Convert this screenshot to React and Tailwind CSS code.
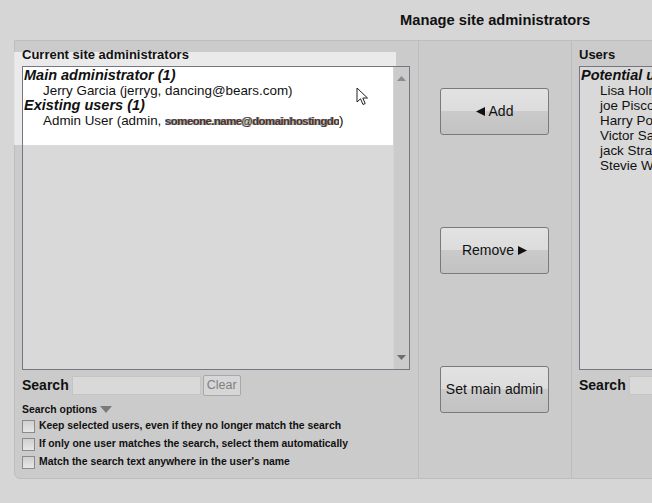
import React from 'react';

const Btn = ({ children, className = '' }) => (
    <button
        className={`w-[109px] h-[47px] rounded-[3px] border border-[#7a7a7a] bg-[linear-gradient(#e2e2e2_0%,#dcdcdc_49%,#cacaca_50%,#c2c2c2_100%)] text-[14px] text-[#111] flex items-center justify-center gap-1 ${className}`}
    >
        {children}
    </button>
);

const Scrollbar = () => (
    <div className="w-[16px] h-full bg-[#cbcbcb] border-l border-[#d4d4d4] flex flex-col justify-between items-center py-[9px]">
        <svg width="9" height="5" viewBox="0 0 9 5"><path d="M0 5 L4.5 0 L9 5 Z" fill="#8c8c8c" /></svg>
        <svg width="9" height="5" viewBox="0 0 9 5"><path d="M0 0 L4.5 5 L9 0 Z" fill="#6e6e6e" /></svg>
    </div>
);

const Checkbox = ({ label }) => (
    <label className="flex items-center gap-[4px] h-[18px]">
        <span className="w-[13px] h-[13px] border border-[#8a8a8a] bg-[linear-gradient(#d0d0d0,#e6e6e6)] shrink-0" />
        <span className="text-[10.4px] font-bold text-[#111]">{label}</span>
    </label>
);

const SearchRow = ({ clear = true }) => (
    <div className="flex items-center h-[22px] mt-[4px]">
        <span className="text-[14px] font-bold text-[#111] mr-[3px]">Search</span>
        <input className="w-[129px] h-[19px] bg-[#d9d9d9] border border-[#c4c4c4] outline-none" />
        {clear && (
            <button className="ml-[2px] h-[21px] w-[38px] rounded-[2px] border border-[#a8a8a8] bg-[#d6d6d6] text-[12.5px] text-[#808080]">
                Clear
            </button>
        )}
    </div>
);

const Name = ({ children }) => <div className="pl-[19px] text-[13.4px]">{children}</div>;
const Group = ({ children }) => <div className="font-bold italic text-[14.5px]">{children}</div>;

export default function App() {
    return (
        <div className="relative w-[652px] h-[503px] overflow-hidden bg-[#d6d6d6] font-['Liberation_Sans',Arial,sans-serif]">
            <div className="h-[40px] pl-[400px] pt-[9px] text-[14.7px] font-bold text-[#111] whitespace-nowrap">
                Manage site administrators
            </div>

            <div className="ml-[14px] w-[760px] h-[439px] flex border border-[#bdbdbd] bg-[#cbcbcb] rounded-bl-[6px]">
                {/* Current admins */}
                <div className="relative isolate w-[404px] shrink-0 border-r border-[#bdbdbd] pl-[7px] pt-[5px]">
                    <div className="absolute -left-[1px] top-[11px] w-[382px] h-[93px] bg-white/60 -z-10" />
                    <div className="text-[13px] font-bold text-[#111] leading-[17px] h-[20px]">Current site administrators</div>
                    <div className="w-[388px] h-[304px] border border-[#767680] flex bg-[linear-gradient(#ffffff_0px,#ffffff_78px,#d9d9d9_78px)]">
                        <div className="flex-1 leading-[15px] text-[#111] pl-[1px] pt-[1px] whitespace-nowrap">
                            <Group>Main administrator (1)</Group>
                            <Name>Jerry Garcia (jerryg, dancing@bears.com)</Name>
                            <Group>Existing users (1)</Group>
                            <Name>
                                Admin User (admin,{' '}
                                <span className="inline-block w-[174px] overflow-hidden whitespace-nowrap align-middle text-[11.5px] leading-[12px] font-bold tracking-[-0.6px] text-[#4a3550] blur-[0.7px] [text-shadow:1px_0_#d9a441,-1px_0_#4aa8d8]">
                                    someone.name@domainhostingdomain.com
                                </span>
                                )
                            </Name>
                        </div>
                        <Scrollbar />
                    </div>
                    <SearchRow />
                    <div className="mt-[6px] flex items-center gap-[3px] text-[10.4px] font-bold text-[#111] h-[15px]">
                        Search options
                        <svg width="12" height="7" viewBox="0 0 12 7"><path d="M0 0 L12 0 L6 7 Z" fill="#7a7a7a" /></svg>
                    </div>
                    <Checkbox label="Keep selected users, even if they no longer match the search" />
                    <Checkbox label="If only one user matches the search, select them automatically" />
                    <Checkbox label="Match the search text anywhere in the user's name" />
                </div>

                {/* Buttons */}
                <div className="w-[153px] shrink-0 border-r border-[#bdbdbd] pl-[21px] pt-[47px] flex flex-col gap-[92px]">
                    <Btn>
                        <svg width="9" height="9" viewBox="0 0 9 9"><path d="M0 4.5 L9 0 L9 9 Z" fill="#111" /></svg>
                        Add
                    </Btn>
                    <Btn>
                        Remove
                        <svg width="9" height="9" viewBox="0 0 9 9"><path d="M9 4.5 L0 0 L0 9 Z" fill="#111" /></svg>
                    </Btn>
                    <Btn>Set main admin</Btn>
                </div>

                {/* Potential users */}
                <div className="flex-1 pl-[7px] pt-[5px]">
                    <div className="text-[13px] font-bold text-[#111] leading-[17px] h-[20px]">Users</div>
                    <div className="w-[388px] h-[304px] border border-[#767680] bg-[#d9d9d9] leading-[15px] text-[#111] pl-[1px] pt-[1px] whitespace-nowrap">
                        <Group>Potential users (6)</Group>
                        <Name>Lisa Holmes (lisah, lisa@example.com)</Name>
                        <Name>joe Piscopo (joep, joe@example.com)</Name>
                        <Name>Harry Potter (harryp, harry@example.com)</Name>
                        <Name>Victor Sanchez (victors, victor@example.com)</Name>
                        <Name>jack Straw (jacks, jack@example.com)</Name>
                        <Name>Stevie Wonder (steview, stevie@example.com)</Name>
                    </div>
                    <SearchRow clear={false} />
                </div>
            </div>

            {/* mouse cursor */}
            <svg className="absolute left-[356px] top-[87px]" width="14" height="20" viewBox="0 0 14 20">
                <path d="M1 1 L1 15 L4.5 11.8 L7 17.5 L9.2 16.5 L6.8 11 L11.5 11 Z" fill="#fff" stroke="#222" strokeWidth="1" strokeLinejoin="round" />
            </svg>
        </div>
    );
}
